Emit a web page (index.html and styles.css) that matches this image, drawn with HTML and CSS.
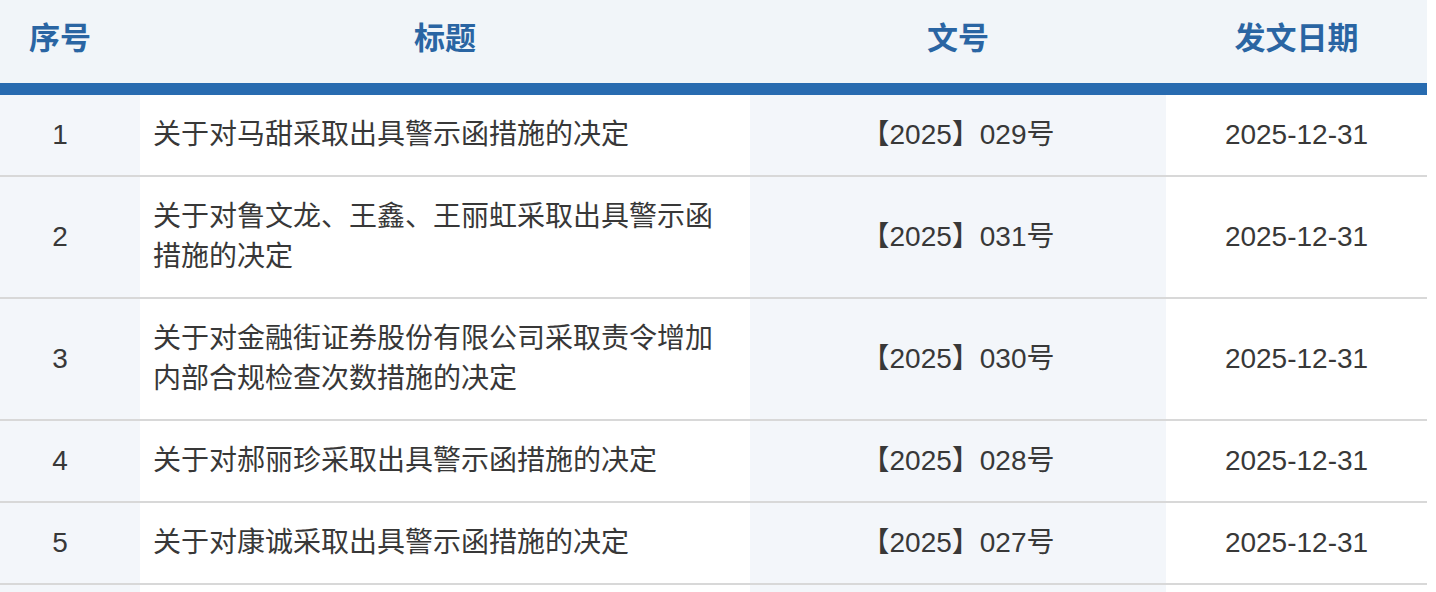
FILE: index.html
```html
<!DOCTYPE html>
<html lang="zh-CN">
<head>
<meta charset="utf-8">
<link rel="stylesheet" href="styles.css">
</head>
<body>
<table class="doc-table">
  <colgroup>
    <col class="c-no">
    <col class="c-title">
    <col class="c-num">
    <col class="c-date">
  </colgroup>
  <thead>
    <tr>
      <th class="cell-no">序号</th>
      <th>标题</th>
      <th>文号</th>
      <th>发文日期</th>
    </tr>
  </thead>
  <tbody>
    <tr>
      <td class="cell-no">1</td>
      <td class="cell-title">关于对马甜采取出具警示函措施的决定</td>
      <td class="cell-num">【2025】029号</td>
      <td class="cell-date">2025-12-31</td>
    </tr>
    <tr>
      <td class="cell-no">2</td>
      <td class="cell-title">关于对鲁文龙、王鑫、王丽虹采取出具警示函措施的决定</td>
      <td class="cell-num">【2025】031号</td>
      <td class="cell-date">2025-12-31</td>
    </tr>
    <tr>
      <td class="cell-no">3</td>
      <td class="cell-title">关于对金融街证券股份有限公司采取责令增加内部合规检查次数措施的决定</td>
      <td class="cell-num">【2025】030号</td>
      <td class="cell-date">2025-12-31</td>
    </tr>
    <tr>
      <td class="cell-no">4</td>
      <td class="cell-title">关于对郝丽珍采取出具警示函措施的决定</td>
      <td class="cell-num">【2025】028号</td>
      <td class="cell-date">2025-12-31</td>
    </tr>
    <tr>
      <td class="cell-no">5</td>
      <td class="cell-title">关于对康诚采取出具警示函措施的决定</td>
      <td class="cell-num">【2025】027号</td>
      <td class="cell-date">2025-12-31</td>
    </tr>
    <tr class="row-empty">
      <td class="cell-no"></td>
      <td class="cell-title"></td>
      <td class="cell-num"></td>
      <td class="cell-date"></td>
    </tr>
  </tbody>
</table>
</body>
</html>
```

FILE: styles.css
```css
html, body {
  margin: 0;
  padding: 0;
  background: #ffffff;
}

body {
  font-family: "Liberation Sans", "Noto Sans CJK SC", sans-serif;
  color: #383838;
}

.doc-table {
  width: 1427px;
  border-collapse: collapse;
  table-layout: fixed;
}

.c-no { width: 140px; }
.c-title { width: 610px; }
.c-num { width: 416px; }
.c-date { width: 261px; }

.doc-table th {
  height: 77px;
  padding: 0 0 6px 0;
  background: #f1f5f9;
  color: #2a65a3;
  font-size: 31px;
  font-weight: bold;
  text-align: center;
  vertical-align: middle;
  border-bottom: 12px solid #286bb0;
  line-height: 40px;
}

.doc-table th.cell-no {
  padding-right: 20px;
}

.doc-table td {
  padding: 20px 13px;
  font-size: 28px;
  line-height: 40px;
  height: 40px;
  text-align: center;
  vertical-align: middle;
  border-bottom: 2px solid #d8d8d8;
}

.doc-table td.cell-no {
  background: #f3f6fa;
  padding-left: 0;
  padding-right: 20px;
}

.doc-table td.cell-title {
  text-align: left;
  background: #ffffff;
}

.doc-table td.cell-num {
  background: #f3f6fa;
}

.doc-table td.cell-date {
  background: #ffffff;
}
```
